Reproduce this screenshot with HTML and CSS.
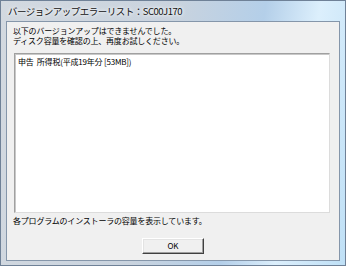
FILE: index.html
```html
<!DOCTYPE html>
<html lang="ja">
<head>
    <meta charset="UTF-8">
    <title>バージョンアップエラーリスト</title>
    <link rel="stylesheet" href="styles.css">
</head>
<body>
    <div class="window">
        <div class="titlebar">バージョンアップエラーリスト：SC00J170</div>
        <div class="client">
            <div class="message">
                以下のバージョンアップはできませんでした。<br>
                ディスク容量を確認の上、再度お試しください。
            </div>
            <div class="listbox">
                <div class="list-item">申告&nbsp;&nbsp;所得税(平成19年分 [53MB])</div>
            </div>
            <div class="note">各プログラムのインストーラの容量を表示しています。</div>
            <div class="buttons">
                <button class="ok-button">OK</button>
            </div>
        </div>
    </div>
</body>
</html>
```

FILE: styles.css
```css
body {
    margin: 0;
    font-family: "Noto Sans CJK JP", "Liberation Sans", sans-serif;
    background-color: #ffffff;
}
.window {
    width: 346px;
    height: 266px;
    box-sizing: border-box;
    border: 1px solid #6f8197;
    padding: 0 5px 4px 5px;
    background: linear-gradient(100deg, #d3d9e0 0%, #c9d3de 45%, #b4cfe9 68%, #dceffc 82%, #bfe0f6 100%);
}
.titlebar {
    height: 20px;
    line-height: 20px;
    padding-left: 2px;
    font-size: 9.5px;
    color: #111;
    letter-spacing: -0.5px;
    text-shadow: 0 0 5px #fff, 0 0 3px #fff;
    white-space: nowrap;
}
.client {
    width: 334px;
    height: 240px;
    box-sizing: border-box;
    border: 1px solid #8596aa;
    background-color: #f0f0f0;
    padding: 4px 0 0 6px;
}
.message {
    font-size: 8px;
    line-height: 10px;
    color: #000;
    letter-spacing: -0.2px;
}
.listbox {
    width: 316px;
    height: 160px;
    box-sizing: border-box;
    margin: 7px 0 0 1px;
    background-color: #fff;
    border-top: 1px solid #a0a0a0;
    border-left: 1px solid #a0a0a0;
    border-right: 1px solid #dcdcdc;
    border-bottom: 1px solid #dcdcdc;
    box-shadow: inset 1px 1px 0 #c8c8c8;
    padding: 3px 0 0 3px;
}
.list-item {
    font-size: 8px;
    line-height: 9px;
    color: #000;
    letter-spacing: -0.2px;
}
.note {
    margin-top: 3px;
    font-size: 8px;
    line-height: 9px;
    color: #000;
    letter-spacing: -0.2px;
}
.buttons {
    margin-top: 13px;
    padding-right: 6px;
    display: flex;
    justify-content: center;
}
.ok-button {
    width: 62px;
    height: 16px;
    padding: 0;
    font-family: "Noto Sans CJK JP", "Liberation Sans", sans-serif;
    font-size: 8px;
    line-height: 12px;
    color: #000;
    background-color: #f0f0f0;
    border-top: 1px solid #ffffff;
    border-left: 1px solid #ffffff;
    border-right: 1px solid #404040;
    border-bottom: 1px solid #404040;
    box-shadow: inset -1px -1px 0 #a0a0a0, inset 1px 1px 0 #e3e3e3;
}
```
